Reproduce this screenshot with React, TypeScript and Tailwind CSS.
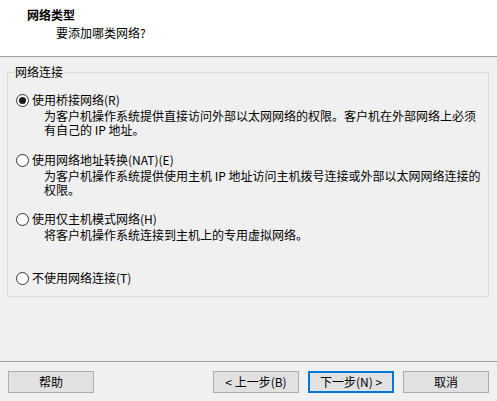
import React from 'react';

const font = { fontFamily: '"Noto Sans CJK SC", "Noto Sans", sans-serif' };

interface OptionProps {
    label: string;
    checked?: boolean;
    lines?: string[];
    className?: string;
}

// radio button in the classic windows look
function Radio({ checked }: { checked?: boolean }) {
    return (
        <span className="flex h-[13px] w-[13px] shrink-0 items-center justify-center rounded-full border border-[#333333] bg-white">
            {checked && <span className="h-[7px] w-[7px] rounded-full bg-[#1a1a1a]" />}
        </span>
    );
}

function Option({ label, checked, lines = [], className = '' }: OptionProps) {
    return (
        <div className={className}>
            <div className="flex items-center gap-[3px] h-[14px]">
                <Radio checked={checked} />
                <span className="whitespace-nowrap leading-[14px]">{label}</span>
            </div>
            {lines.length > 0 && (
                <div className="mt-[2px] pl-[28px]">
                    {lines.map((l) => (
                        <div key={l} className="whitespace-nowrap leading-[14px]">{l}</div>
                    ))}
                </div>
            )}
        </div>
    );
}

function Button({ children, primary }: { children: React.ReactNode; primary?: boolean }) {
    return (
        <button
            className={`flex h-[22px] w-[86px] items-center justify-center bg-[#e1e1e1] text-[12px] leading-[14px] text-black ${
                primary ? 'border-2 border-[#0078d7]' : 'border border-[#adadad]'
            }`}
        >
            {children}
        </button>
    );
}

export default function App() {
    return (
        <div className="flex h-[401px] w-[497px] flex-col bg-[#f0f0f0] text-[12px] text-black" style={font}>
            {/* Header */}
            <div className="h-[56px] bg-white pl-[27px] pt-[8px]">
                <div className="font-bold leading-[14px]">网络类型</div>
                <div className="mt-[4px] pl-[29px] leading-[14px]">要添加哪类网络?</div>
            </div>
            <div className="h-px bg-[#a0a0a0]" />

            {/* Group box */}
            <div className="px-[7px] pt-[15px]">
                <div className="relative h-[225px] w-[482px] border border-[#dcdcdc] pl-[8px] pt-[20px]">
                    <span className="absolute left-[6px] top-[-8px] bg-[#f0f0f0] px-[1px] leading-[14px]">网络连接</span>

                    <Option
                        checked
                        label="使用桥接网络(R)"
                        lines={[
                            '为客户机操作系统提供直接访问外部以太网网络的权限。客户机在外部网络上必须',
                            '有自己的 IP 地址。',
                        ]}
                    />
                    <Option
                        className="mt-[16px]"
                        label="使用网络地址转换(NAT)(E)"
                        lines={[
                            '为客户机操作系统提供使用主机 IP 地址访问主机拨号连接或外部以太网网络连接的',
                            '权限。',
                        ]}
                    />
                    <Option
                        className="mt-[15px]"
                        label="使用仅主机模式网络(H)"
                        lines={['将客户机操作系统连接到主机上的专用虚拟网络。']}
                    />
                    <Option className="mt-[29px]" label="不使用网络连接(T)" />
                </div>
            </div>

            <div className="flex-1" />

            {/* Footer */}
            <div className="h-px bg-[#a0a0a0]" />
            <div className="flex items-center px-[8px] pb-[8px] pt-[9px]">
                <Button>帮助</Button>
                <div className="flex-1" />
                <div className="flex gap-[9px]">
                    <Button>&lt; 上一步(B)</Button>
                    <Button primary>下一步(N) &gt;</Button>
                    <Button>取消</Button>
                </div>
            </div>
        </div>
    );
}
